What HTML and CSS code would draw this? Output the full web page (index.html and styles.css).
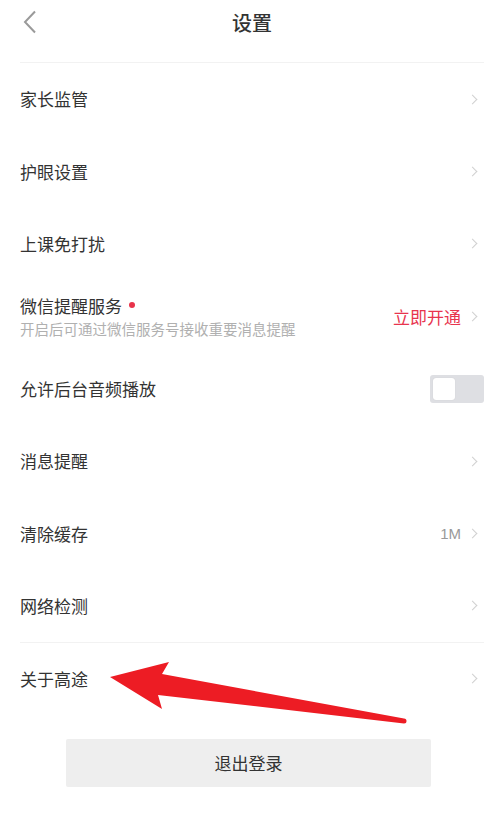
FILE: index.html
```html
<!DOCTYPE html>
<html lang="zh-CN">
<head>
  <meta charset="UTF-8">
  <meta name="viewport" content="width=device-width, initial-scale=1.0">
  <title>设置</title>
  <link rel="stylesheet" href="styles.css">
</head>
<body>
  <div class="page">
    <div class="header">
      <div class="back">
        <svg width="14" height="24" viewBox="0 0 14 24"><path d="M12 1.5 L2 12 L12 22.5" fill="none" stroke="#9a9a9a" stroke-width="2"/></svg>
      </div>
      <h1 class="title">设置</h1>
      <div></div>
    </div>

    <ul class="list">
      <li class="row">
        <span class="label">家长监管</span>
        <span class="arrow"></span>
      </li>
      <li class="row">
        <span class="label">护眼设置</span>
        <span class="arrow"></span>
      </li>
      <li class="row">
        <span class="label">上课免打扰</span>
        <span class="arrow"></span>
      </li>
      <li class="row">
        <div class="text">
          <span class="label">微信提醒服务<i class="dot"></i></span>
          <span class="desc">开启后可通过微信服务号接收重要消息提醒</span>
        </div>
        <span class="value red">立即开通</span>
        <span class="arrow"></span>
      </li>
      <li class="row">
        <span class="label">允许后台音频播放</span>
        <span class="switch"><i class="knob"></i></span>
      </li>
      <li class="row">
        <span class="label">消息提醒</span>
        <span class="arrow"></span>
      </li>
      <li class="row">
        <span class="label">清除缓存</span>
        <span class="value">1M</span>
        <span class="arrow"></span>
      </li>
      <li class="row">
        <span class="label">网络检测</span>
        <span class="arrow"></span>
      </li>
      <li class="row split">
        <span class="label">关于高途</span>
        <span class="arrow"></span>
      </li>
    </ul>

    <button type="button" class="logout">退出登录</button>

    <svg class="mark" width="491" height="818" viewBox="0 0 491 818">
      <path d="M110 677 L169 662 L162 674 L404 718.5 A2.5 2.5 0 0 1 404 723.5 L158 695 L162 709 Z" fill="#ed1c24"/>
    </svg>
  </div>
</body>
</html>
```

FILE: styles.css
```css
* {
  box-sizing: border-box;
}
body {
  margin: 0;
  overflow: hidden;
  background: #fff;
  font-family: "Noto Sans CJK SC", "Noto Sans", sans-serif;
  color: #333;
}
.page {
  position: relative;
  width: 504px;
  height: 818px;
}
.header {
  display: grid;
  grid-template-columns: 1fr auto 1fr;
  align-items: center;
  height: 63px;
  margin: 0 20px;
  padding-bottom: 18px;
  border-bottom: 1px solid #f2f2f2;
}
.back {
  display: flex;
  align-items: center;
  padding-left: 3px;
}
.title {
  margin: 0;
  font-size: 20px;
  font-weight: 500;
  color: #333;
}
.list {
  list-style: none;
  margin: 0;
  padding: 0 20px;
}
.row {
  display: flex;
  align-items: center;
  height: 72.4px;
}
.row.split {
  border-top: 1px solid #f2f2f2;
}
.text {
  display: flex;
  flex-direction: column;
  margin-right: auto;
  padding-top: 2px;
}
.label {
  font-size: 17px;
  line-height: 24px;
  margin-right: auto;
}
.text .label {
  margin-right: 0;
}
.dot {
  display: inline-block;
  width: 6px;
  height: 6px;
  margin-left: 7px;
  border-radius: 50%;
  background: #e8334a;
  vertical-align: 5px;
}
.desc {
  font-size: 14.5px;
  line-height: 22px;
  color: #b0b0b0;
}
.value {
  font-family: "Liberation Sans", sans-serif;
  font-size: 15px;
  color: #999;
  margin-right: 8px;
}
.value.red {
  font-family: "Noto Sans CJK SC", sans-serif;
  font-size: 17px;
  color: #e8344e;
}
.arrow {
  width: 7px;
  height: 7px;
  margin-right: 8px;
  border-top: 1.5px solid #d0d0d0;
  border-right: 1.5px solid #d0d0d0;
  transform: rotate(45deg);
}
.switch {
  display: flex;
  align-items: center;
  width: 54px;
  height: 28px;
  padding: 0 3px;
  border-radius: 3px;
  background: #dedfe3;
}
.knob {
  width: 22px;
  height: 22px;
  border-radius: 3px;
  background: #fff;
  box-shadow: 0 0 1px rgba(0, 0, 0, 0.15);
}
.logout {
  display: block;
  width: 365px;
  height: 48px;
  margin: 24px 0 0 66px;
  border: none;
  border-radius: 2px;
  background: #eeeeee;
  font-family: "Noto Sans CJK SC", sans-serif;
  font-size: 17px;
  color: #333;
}
.mark {
  position: absolute;
  left: 0;
  top: 0;
  pointer-events: none;
}
```
